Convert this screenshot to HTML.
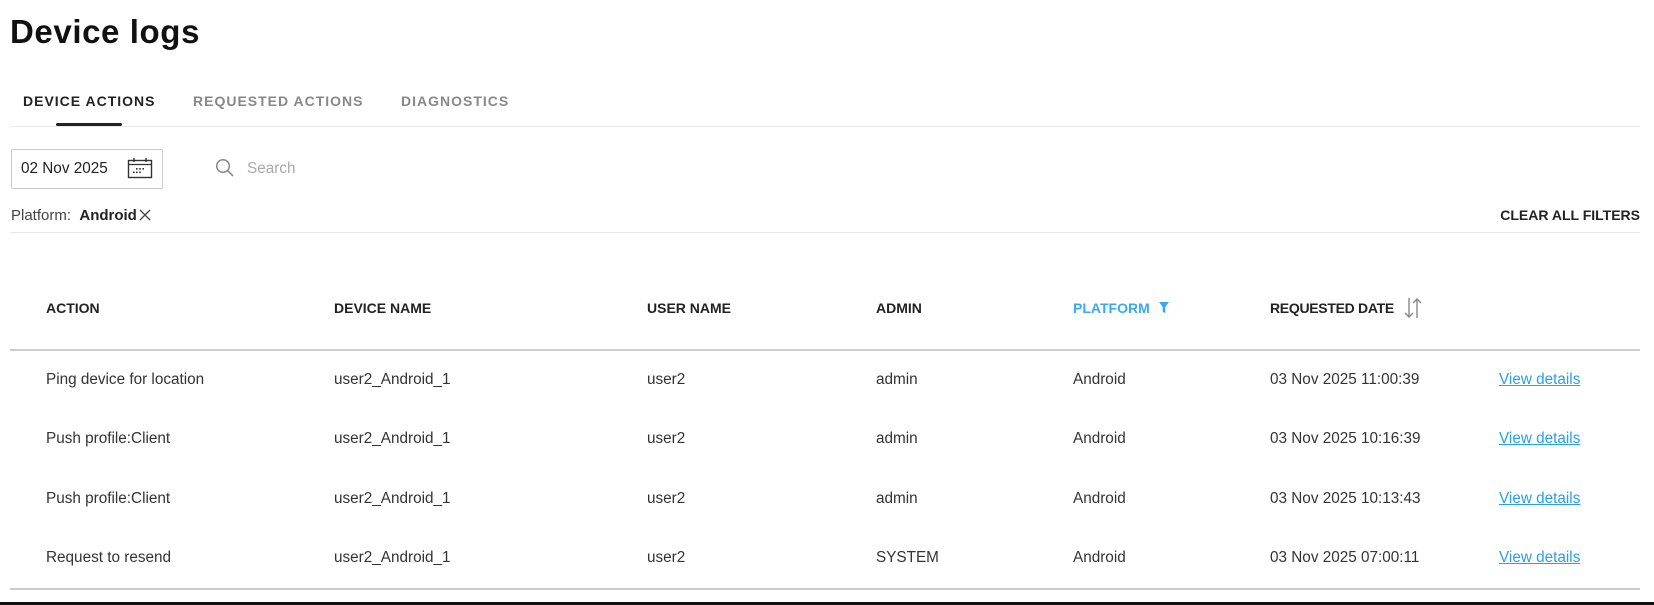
<!DOCTYPE html>
<html><head><meta charset="utf-8"><style>
*{margin:0;padding:0;box-sizing:border-box}
body{width:1654px;height:605px;background:#fff;font-family:"Liberation Sans",sans-serif;color:#222;position:relative;overflow:hidden}
.a{position:absolute;white-space:nowrap}
h1{position:absolute;left:10px;top:13px;font-size:33px;font-weight:bold;color:#111;letter-spacing:0.6px}
.tab{position:absolute;top:93px;font-size:14px;font-weight:bold;letter-spacing:1px;color:#888}
.hd{position:absolute;top:300px;font-size:14px;font-weight:bold;color:#222}
.c{position:absolute;font-size:15.3px;color:#333}
.lk{color:#2b9fe6;text-decoration:underline}
</style></head><body>
<h1>Device logs</h1>
<div class="tab" style="left:23px;color:#222">DEVICE ACTIONS</div>
<div class="tab" style="left:193px">REQUESTED ACTIONS</div>
<div class="tab" style="left:401px">DIAGNOSTICS</div>
<div class="a" style="left:10px;top:126px;width:1630px;height:1px;background:#e6e9ec"></div>
<div class="a" style="left:56px;top:123px;width:66px;height:3px;background:#222;border-radius:2px"></div>

<div class="a" style="left:11px;top:149px;width:152px;height:40px;border:1px solid #ccc;border-radius:2px"></div>
<div class="c" style="left:21px;top:160px;color:#222">02 Nov 2025</div>
<svg class="a" style="left:127px;top:157px" width="26" height="22" viewBox="0 0 26 22"><rect x="1.5" y="3.5" width="23" height="17" fill="none" stroke="#333" stroke-width="1.4"/><line x1="1.5" y1="7.5" x2="24.5" y2="7.5" stroke="#333" stroke-width="1.2"/><line x1="7" y1="1" x2="7" y2="5" stroke="#333" stroke-width="1.4"/><line x1="19" y1="1" x2="19" y2="5" stroke="#333" stroke-width="1.4"/><g fill="#333"><rect x="9" y="11" width="1.6" height="1.6"/><rect x="12.2" y="11" width="1.6" height="1.6"/><rect x="15.4" y="11" width="1.6" height="1.6"/><rect x="6" y="14.5" width="1.6" height="1.6"/><rect x="9" y="14.5" width="1.6" height="1.6"/><rect x="12.2" y="14.5" width="1.6" height="1.6"/></g></svg>
<svg class="a" style="left:215px;top:158px" width="20" height="20" viewBox="0 0 20 20"><circle cx="8" cy="8" r="6.3" fill="none" stroke="#888" stroke-width="1.5"/><line x1="12.6" y1="12.6" x2="18" y2="18" stroke="#888" stroke-width="1.6"/></svg>
<div class="c" style="left:247px;top:160px;color:#aaa">Search</div>

<div class="c" style="left:11px;top:207px;color:#444;font-size:15px">Platform:&nbsp; <b style="color:#222">Android</b></div>
<svg class="a" style="left:138px;top:208px" width="14" height="14" viewBox="0 0 14 14"><path d="M2 2L12 12M12 2L2 12" stroke="#444" stroke-width="1.3"/></svg>
<div class="a" style="right:14px;top:207px;font-size:14px;font-weight:bold;color:#222">CLEAR ALL FILTERS</div>
<div class="a" style="left:10px;top:232px;width:1630px;height:1px;background:#e6e9ec"></div>

<div class="hd" style="left:46px">ACTION</div>
<div class="hd" style="left:334px">DEVICE NAME</div>
<div class="hd" style="left:647px">USER NAME</div>
<div class="hd" style="left:876px">ADMIN</div>
<div class="hd" style="left:1073px;color:#3aa8f0">PLATFORM</div>
<svg class="a" style="left:1159px;top:302px" width="10" height="12" viewBox="0 0 10 12"><path d="M0 0H10L6.3 5V11L3.7 10V5Z" fill="#3aa8f0"/></svg>
<div class="hd" style="left:1270px;letter-spacing:-0.3px">REQUESTED DATE</div>
<svg class="a" style="left:1402px;top:296px" width="22" height="24" viewBox="0 0 22 24"><path d="M7 2V21M3 17L7 21L11 17M15 22V3M11 7L15 3L19 7" fill="none" stroke="#888" stroke-width="1.4"/></svg>
<div class="a" style="left:10px;top:349px;width:1630px;height:2px;background:#ccc"></div>

<div class="c" style="left:46px;top:371px">Ping device for location</div>
<div class="c" style="left:334px;top:371px">user2_Android_1</div>
<div class="c" style="left:647px;top:371px">user2</div>
<div class="c" style="left:876px;top:371px">admin</div>
<div class="c" style="left:1073px;top:371px">Android</div>
<div class="c" style="left:1270px;top:371px">03 Nov 2025 11:00:39</div>
<div class="c lk" style="left:1499px;top:371px">View details</div>

<div class="c" style="left:46px;top:430px">Push profile:Client</div>
<div class="c" style="left:334px;top:430px">user2_Android_1</div>
<div class="c" style="left:647px;top:430px">user2</div>
<div class="c" style="left:876px;top:430px">admin</div>
<div class="c" style="left:1073px;top:430px">Android</div>
<div class="c" style="left:1270px;top:430px">03 Nov 2025 10:16:39</div>
<div class="c lk" style="left:1499px;top:430px">View details</div>

<div class="c" style="left:46px;top:490px">Push profile:Client</div>
<div class="c" style="left:334px;top:490px">user2_Android_1</div>
<div class="c" style="left:647px;top:490px">user2</div>
<div class="c" style="left:876px;top:490px">admin</div>
<div class="c" style="left:1073px;top:490px">Android</div>
<div class="c" style="left:1270px;top:490px">03 Nov 2025 10:13:43</div>
<div class="c lk" style="left:1499px;top:490px">View details</div>

<div class="c" style="left:46px;top:549px">Request to resend</div>
<div class="c" style="left:334px;top:549px">user2_Android_1</div>
<div class="c" style="left:647px;top:549px">user2</div>
<div class="c" style="left:876px;top:549px">SYSTEM</div>
<div class="c" style="left:1073px;top:549px">Android</div>
<div class="c" style="left:1270px;top:549px">03 Nov 2025 07:00:11</div>
<div class="c lk" style="left:1499px;top:549px">View details</div>

<div class="a" style="left:10px;top:588px;width:1630px;height:2px;background:#ccc"></div>
<div class="a" style="left:0;top:602px;width:1654px;height:3px;background:#111"></div>
</body></html>
